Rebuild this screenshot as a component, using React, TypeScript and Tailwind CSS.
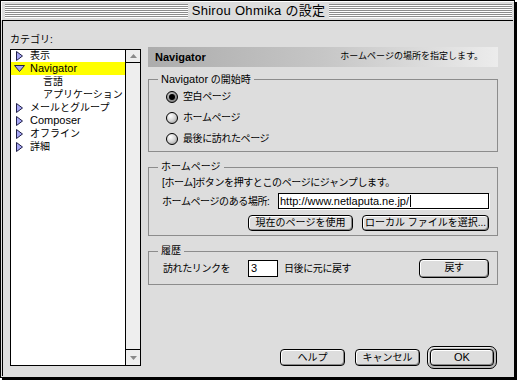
import type { ReactNode } from "react";

const font = "font-['Liberation_Sans','Noto_Sans_CJK_JP',sans-serif]";

function Stripes() {
  return (
    <div className="flex flex-1 flex-col">
      {Array.from({ length: 7 }).map((_, i) => (
        <div key={i} className="h-[2px] border-t border-[#8c8c8c] bg-white" />
      ))}
    </div>
  );
}

function Btn({ children, className }: { children: ReactNode; className: string }) {
  return (
    <button
      type="button"
      className={`flex items-center justify-center rounded-[4px] border border-black bg-[#dddddd] text-[10px] leading-none text-black shadow-[inset_1px_1px_0_#fff,inset_-1px_-1px_0_#8a8a8a] ${className}`}
    >
      {children}
    </button>
  );
}

function Radio({ label, checked }: { label: string; checked?: boolean }) {
  return (
    <div className="flex h-[21px] items-center gap-[5px]">
      <span
        className={
          checked
            ? "flex h-[12px] w-[12px] items-center justify-center rounded-full border border-black bg-[radial-gradient(circle_at_35%_30%,#c8c8c8_0%,#6a6a6a_100%)]"
            : "flex h-[12px] w-[12px] items-center justify-center rounded-full border border-black bg-[radial-gradient(circle_at_35%_30%,#ffffff_0%,#d4d4d4_50%,#8a8a8a_100%)]"
        }
      >
        {checked && <span className="h-[6px] w-[6px] rounded-full bg-black" />}
      </span>
      <span className="text-[10px] tracking-[-0.4px]">{label}</span>
    </div>
  );
}

function Closed() {
  return (
    <svg width="7" height="10" viewBox="0 0 7 10">
      <path d="M0.5 0.5 L6.5 5 L0.5 9.5 Z" fill="#a4a4f4" stroke="#202048" />
    </svg>
  );
}

function Open() {
  return (
    <svg width="11" height="7" viewBox="0 0 11 7">
      <path d="M0.5 0.5 H10.5 L5.5 6.5 Z" fill="#a4a4f4" stroke="#202048" />
    </svg>
  );
}

const items: { label: string; kind: "closed" | "open" | "child"; latin?: boolean }[] = [
  { label: "表示", kind: "closed" },
  { label: "Navigator", kind: "open", latin: true },
  { label: "言語", kind: "child" },
  { label: "アプリケーション", kind: "child" },
  { label: "メールとグループ", kind: "closed" },
  { label: "Composer", kind: "closed", latin: true },
  { label: "オフライン", kind: "closed" },
  { label: "詳細", kind: "closed" },
];

export default function App() {
  return (
    <div className={`h-[380px] w-[517px] text-black ${font}`}>
      <div className="flex h-[378px] w-[515px] flex-col border border-black bg-[#dddddd] shadow-[2px_2px_0_0_#000]">
        {/* title bar */}
        <div className="flex h-[19px] items-center pl-[4px] pr-[2px] shadow-[inset_1px_1px_0_#fff]">
          <Stripes />
          <span className="px-[4px] text-[13px] leading-[19px] tracking-[0.3px]">Shirou Ohmika の設定</span>
          <Stripes />
        </div>

        <div className="mx-[1px] mb-[1px] flex flex-1 border-l border-t border-black pl-[7px]">
          {/* category list */}
          <div className="flex w-[131px] flex-col pt-[12px]">
            <div className="h-[14px] text-[10px] leading-[14px]">カテゴリ:</div>
            <div className="mt-[2px] flex h-[317px] border border-black bg-white">
              <ul className="-mt-px flex-1">
                {items.map((it) => (
                  <li
                    key={it.label}
                    className={
                      it.kind === "open"
                        ? "flex h-[13px] items-center bg-[#ffff00] pl-[3px]"
                        : "flex h-[13px] items-center pl-[3px]"
                    }
                  >
                    {it.kind === "child" ? (
                      <span className="w-[24px]" />
                    ) : (
                      <span className="flex w-[11px] justify-center">
                        {it.kind === "open" ? <Open /> : <Closed />}
                      </span>
                    )}
                    <span
                      className={
                        it.latin
                          ? "ml-[5px] text-[11px] leading-none"
                          : "ml-[5px] text-[10px] leading-none"
                      }
                    >
                      {it.label}
                    </span>
                  </li>
                ))}
              </ul>
              <div className="flex w-[15px] flex-col justify-between border-l border-black bg-[#eeeeee]">
                <div className="flex h-[13px] items-center justify-center border-b border-black">
                  <svg width="7" height="4" viewBox="0 0 7 4">
                    <path d="M3.5 0 L7 4 H0 Z" fill="#8a8a8a" />
                  </svg>
                </div>
                <div className="flex h-[16px] items-center justify-center border-t border-black">
                  <svg width="7" height="4" viewBox="0 0 7 4">
                    <path d="M0 0 H7 L3.5 4 Z" fill="#8a8a8a" />
                  </svg>
                </div>
              </div>
            </div>
          </div>

          {/* settings panel */}
          <div className="ml-[7px] flex w-[350px] flex-col pb-[7px] pt-[26px]">
            <div className="flex h-[20px] items-center justify-between bg-linear-to-r from-[#acacac] via-[#c6c6c6] to-[#ececec] pl-[7px] pr-[15px]">
              <span className="text-[11px] font-bold">Navigator</span>
              <span className="text-[9px]">ホームページの場所を指定します。</span>
            </div>

            <fieldset className="mt-[6px] border border-[#8c8c8c]">
              <legend className="ml-[9px] px-[3px] text-[10px] leading-[12px]">
                <span className="text-[11px]">Navigator</span> の開始時
              </legend>
              <div className="pb-[2px] pl-[17px]">
                <Radio label="空白ページ" checked />
                <Radio label="ホームページ" />
                <Radio label="最後に訪れたページ" />
              </div>
            </fieldset>

            <fieldset className="mt-[9px] border border-[#8c8c8c]">
              <legend className="ml-[9px] px-[3px] text-[10px] leading-[12px]">ホームページ</legend>
              <div className="pb-[4px] pl-[13px] pr-[8px] text-[10px]">
                <div className="flex h-[18px] items-center tracking-[-0.4px]">
                  [ホーム]ボタンを押すとこのページにジャンプします。
                </div>
                <div className="mt-[2px] flex h-[16px] items-center">
                  <span className="w-[116px] tracking-[-0.4px]">ホームページのある場所:</span>
                  <div className="flex h-[16px] flex-1 items-center border border-black bg-white pl-[1px] shadow-[1px_1px_0_#fff]">
                    <span className="text-[11px] leading-none">http://www.netlaputa.ne.jp/</span>
                    <span className="ml-[1px] h-[12px] w-px bg-black" />
                  </div>
                </div>
                <div className="mt-[6px] flex justify-end gap-[9px]">
                  <Btn className="h-[16px] w-[105px]">現在のページを使用</Btn>
                  <Btn className="h-[16px] w-[127px]">ローカル ファイルを選択...</Btn>
                </div>
              </div>
            </fieldset>

            <fieldset className="mt-[9px] border border-[#8c8c8c]">
              <legend className="ml-[9px] px-[3px] text-[10px] leading-[12px]">履歴</legend>
              <div className="mt-[1px] flex h-[20px] items-center pl-[14px] pr-[8px] text-[10px] tracking-[-0.4px]">
                <span className="w-[85px]">訪れたリンクを</span>
                <div className="flex h-[17px] w-[30px] items-center border border-black bg-white pl-[2px]">
                  <span className="text-[11px] leading-none">3</span>
                </div>
                <span className="ml-[6px]">日後に元に戻す</span>
                <Btn className="ml-auto h-[19px] w-[70px]">戻す</Btn>
              </div>
              <div className="h-[6px]" />
            </fieldset>

            <div className="mt-auto flex items-center justify-end pr-[1px]">
              <Btn className="mr-[10px] h-[17px] w-[65px]">ヘルプ</Btn>
              <Btn className="mr-[7px] h-[17px] w-[65px]">キャンセル</Btn>
              <div className="rounded-[7px] border border-black bg-[#b8b8b8] p-[2px] shadow-[inset_1px_1px_0_#eee]">
                <Btn className="h-[17px] w-[64px] text-[11px]">OK</Btn>
              </div>
            </div>
          </div>
        </div>
      </div>
    </div>
  );
}
